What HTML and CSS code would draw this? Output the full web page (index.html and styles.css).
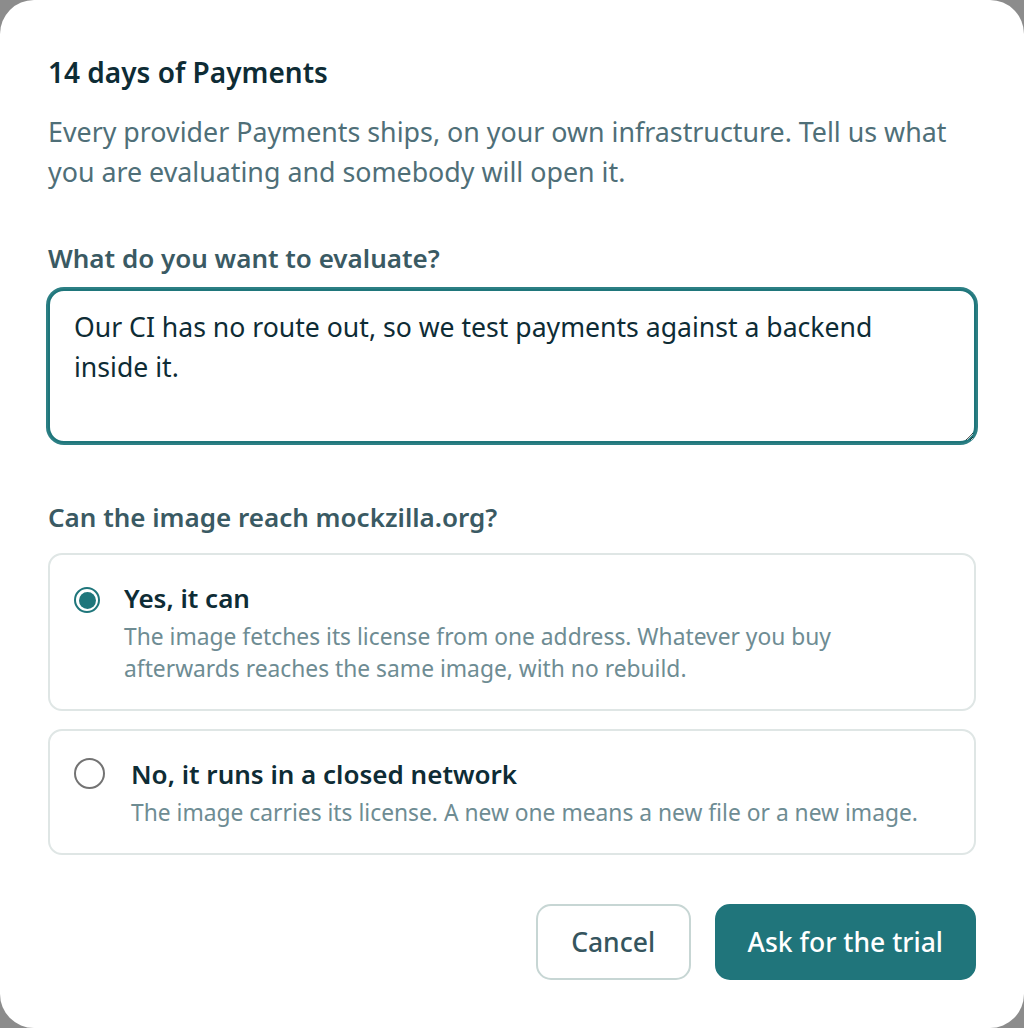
FILE: index.html
```html
<!DOCTYPE html>
<html lang="en">
<head>
<meta charset="utf-8">
<title>14 days of Payments</title>
<link rel="stylesheet" href="styles.css">
</head>
<body>
<div class="dialog">
  <h1 class="title">14 days of Payments</h1>
  <p class="intro">Every provider Payments ships, on your own infrastructure. Tell us what you are evaluating and somebody will open it.</p>

  <label class="label" for="eval">What do you want to evaluate?</label>
  <textarea id="eval" class="textarea">Our CI has no route out, so we test payments against a backend inside it.</textarea>

  <div class="label label-q">Can the image reach mockzilla.org?</div>
  <div class="options">
    <div class="option">
      <span class="radio radio-on"><span class="dot"></span></span>
      <div class="option-text">
        <div class="option-title">Yes, it can</div>
        <div class="option-desc">The image fetches its license from one address. Whatever you buy afterwards reaches the same image, with no rebuild.</div>
      </div>
    </div>
    <div class="option">
      <span class="radio radio-off"></span>
      <div class="option-text">
        <div class="option-title">No, it runs in a closed network</div>
        <div class="option-desc">The image carries its license. A new one means a new file or a new image.</div>
      </div>
    </div>
  </div>

  <div class="actions">
    <button class="btn btn-cancel">Cancel</button>
    <button class="btn btn-primary">Ask for the trial</button>
  </div>
</div>
</body>
</html>
```
FILE: styles.css
```css
html, body {
  margin: 0;
  padding: 0;
}
body {
  background: #8c8c8c;
  font-family: "Noto Sans", "Open Sans", sans-serif;
}
.dialog {
  box-sizing: border-box;
  width: 1024px;
  height: 1028px;
  background: #ffffff;
  border-radius: 34px;
  padding: 54px 48px 48px 48px;
  display: flex;
  flex-direction: column;
}
.title {
  margin: 0;
  font-size: 28px;
  line-height: 36px;
  font-weight: 600;
  color: #0e2c35;
}
.intro {
  margin: 22px 0 0 0;
  font-size: 26.8px;
  line-height: 40px;
  color: #4f6f78;
}
.label {
  display: block;
  margin-top: 49px;
  font-size: 26px;
  line-height: 34px;
  font-weight: 600;
  color: #3a5a63;
}
.label-q {
  margin-top: 57px;
}
.textarea {
  box-sizing: border-box;
  display: block;
  margin-top: 14px;
  width: 100%;
  height: 154px;
  padding: 16px 70px 16px 24px;
  border: 2px solid #1f767b;
  box-shadow: 0 0 0 2px #2c7f84;
  border-radius: 16px;
  font-family: inherit;
  font-size: 26.6px;
  line-height: 40px;
  color: #0e2c35;
  resize: vertical;
  outline: none;
}
.options {
  margin-top: 19px;
  display: flex;
  flex-direction: column;
  gap: 18px;
}
.option {
  display: flex;
  align-items: flex-start;
  border: 2px solid #dfe6e5;
  border-radius: 14px;
  padding: 26px 24px 24px 24px;
}
.radio {
  box-sizing: border-box;
  flex: none;
  border-radius: 50%;
  display: flex;
  align-items: center;
  justify-content: center;
}
.radio-on {
  width: 26px;
  height: 26px;
  margin: 6px 24px 0 0;
  border: 2px solid #1f767b;
}
.radio-on .dot {
  width: 17px;
  height: 17px;
  border-radius: 50%;
  background: #1f767b;
}
.radio-off {
  width: 31px;
  height: 31px;
  margin: 1px 26px 0 0;
  border: 2px solid #737373;
}
.option-title {
  font-size: 26px;
  line-height: 34px;
  font-weight: 600;
  color: #0e2c35;
}
.option-desc {
  margin-top: 6px;
  font-size: 22.8px;
  line-height: 32px;
  color: #6e8c93;
}
.actions {
  margin-top: auto;
  display: flex;
  justify-content: flex-end;
  gap: 24px;
}
.btn {
  box-sizing: border-box;
  height: 76px;
  padding: 0 31px;
  font-family: inherit;
  font-size: 26.5px;
  font-weight: 500;
  border-radius: 15px;
  cursor: pointer;
}
.btn-cancel {
  padding: 0 33.5px;
  background: #ffffff;
  border: 2px solid #c7d6d4;
  color: #35555e;
}
.btn-primary {
  background: #20757b;
  border: 2px solid #20757b;
  color: #ffffff;
}
```
